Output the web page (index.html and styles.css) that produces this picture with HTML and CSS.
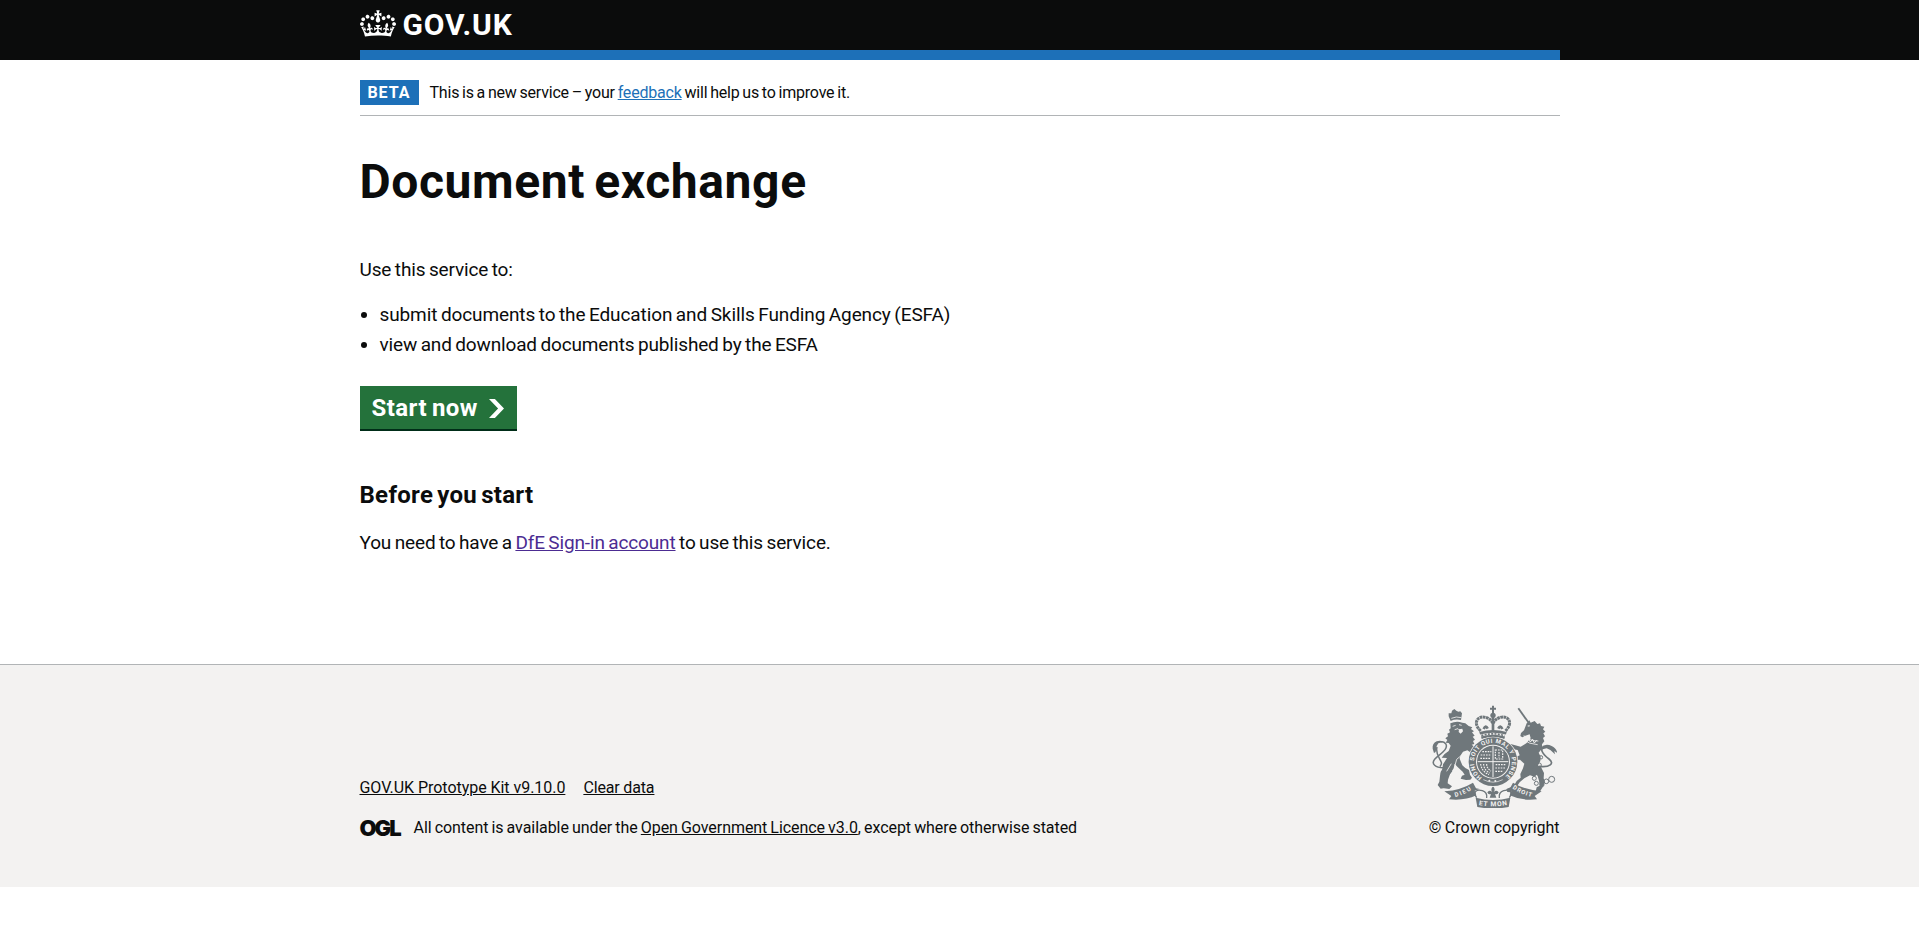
FILE: index.html
```html
<!DOCTYPE html>
<html lang="en">
<head>
<meta charset="utf-8">
<title>Document exchange</title>
<link rel="stylesheet" href="styles.css">
</head>
<body>
<header class="header">
  <div class="container header-inner">
    <a class="logo" href="#">
      <svg class="crown" viewBox="0 0 132 97" fill="currentColor" aria-hidden="true"><path fill-rule="evenodd" d="M25 30.2c3.5 1.5 7.7-.2 9.1-3.7 1.5-3.6-.2-7.8-3.9-9.2-3.6-1.4-7.6.3-9.1 3.9-1.4 3.5.3 7.5 3.9 9zM9 39.5c3.6 1.5 7.8-.2 9.2-3.7 1.5-3.6-.2-7.8-3.9-9.1-3.6-1.5-7.6.2-9.1 3.8-1.4 3.5.3 7.5 3.8 9zM4.4 57.2c3.5 1.5 7.7-.2 9.1-3.8 1.5-3.6-.2-7.7-3.9-9.1-3.5-1.5-7.6.3-9.1 3.8-1.4 3.5.3 7.6 3.9 9.1zm38.3-21.4c3.5 1.5 7.7-.2 9.1-3.8 1.5-3.6-.2-7.7-3.9-9.1-3.6-1.5-7.6.3-9.1 3.8-1.3 3.6.4 7.7 3.9 9.1zm64.4-5.6c-3.6 1.5-7.8-.2-9.1-3.7-1.5-3.6.2-7.8 3.8-9.2 3.6-1.4 7.7.3 9.2 3.9 1.3 3.5-.4 7.5-3.9 9zm15.9 9.3c-3.6 1.5-7.7-.2-9.1-3.7-1.5-3.6.2-7.8 3.7-9.1 3.6-1.5 7.7.2 9.2 3.8 1.5 3.5-.3 7.5-3.8 9zm4.7 17.7c-3.6 1.5-7.8-.2-9.2-3.8-1.5-3.6.2-7.7 3.9-9.1 3.6-1.5 7.7.3 9.2 3.8 1.3 3.5-.4 7.6-3.9 9.1zM89.3 35.8c-3.6 1.5-7.8-.2-9.2-3.8-1.4-3.6.2-7.7 3.9-9.1 3.6-1.5 7.7.3 9.2 3.8 1.4 3.6-.3 7.7-3.9 9.1zM69.7 17.7l8.9 4.7V9.3l-8.9 2.8c-.2-.3-.5-.6-.9-.9L72.4 0H59.6l3.5 11.2c-.3.3-.6.5-.9.9l-8.8-2.8v13.1l8.8-4.7c.3.3.6.7.9.9l-5 15.4v.1c-.2.8-.4 1.6-.4 2.4 0 4.1 3.1 7.5 7 8.1h.2c.3 0 .7.1 1 .1.4 0 .7 0 1-.1h.2c4-.6 7.1-4.1 7.1-8.1 0-.8-.1-1.7-.4-2.4V34l-5.1-15.4c.4-.2.7-.6 1-.9zM66 92.8c16.9 0 32.8 1.1 47.1 3.2 4-16.9 8.9-26.7 14-33.5l-9.6-3.4c1 4.9 1.1 7.2 0 10.2-1.5-1.4-3-4.3-4.2-8.7L108.6 76c2.8-2 5-3.2 7.5-3.3-4.4 9.4-10 11.9-13.6 11.2-4.3-.8-6.3-4.6-5.6-7.9 1-4.7 5.7-5.9 8-.5 4.3-8.7-3-11.4-7.6-8.8 7.1-7.2 7.9-13.5 2.1-21.1-8 6.1-8.1 12.3-4.5 20.8-4.7-5.4-12.1-2.5-9.5 6.2 3.4-5.2 7.9-2 7.2 3.1-.6 4.3-6.4 7.8-13.5 7.2-10.3-.9-10.9-8-11.2-13.8 2.5-.5 7.1 1.8 11 7.3L80.2 60c-4.1 4.4-8 5.3-12.3 5.4 1.4-4.4 8-11.6 8-11.6H55.5s6.4 7.2 7.9 11.6c-4.2-.1-8-1-12.3-5.4l1.4 16.4c3.9-5.5 8.5-7.7 10.9-7.3-.3 5.8-.9 12.8-11.1 13.8-7.2.6-12.9-2.9-13.5-7.2-.7-5 3.8-8.3 7.1-3.1 2.7-8.7-4.6-11.6-9.4-6.2 3.7-8.5 3.6-14.7-4.6-20.8-5.8 7.6-5 13.9 2.2 21.1-4.7-2.6-11.9.1-7.7 8.8 2.3-5.5 7.1-4.2 8.1.5.7 3.3-1.3 7.1-5.7 7.9-3.5.7-9-1.8-13.5-11.2 2.5.1 4.7 1.3 7.5 3.3l-4.7-15.4c-1.2 4.4-2.7 7.2-4.3 8.7-1.1-3-.9-5.3 0-10.2l-9.5 3.4c5 6.9 9.9 16.7 14 33.5 14.8-2.1 30.8-3.2 47.7-3.2z"/></svg>
      <span class="logo-text">GOV.UK</span>
    </a>
  </div>
</header>
<div class="container">
  <div class="phase-banner">
    <strong class="tag"><span>BETA</span></strong>
    <span class="phase-text">This is a new service – your <a class="link" href="#">feedback</a> will help us to improve it.</span>
  </div>
  <main class="main">
    <h1 class="title">Document exchange</h1>
    <p class="body intro">Use this service to:</p>
    <ul class="list">
      <li class="item-submit">submit documents to the Education and Skills Funding Agency (ESFA)</li>
      <li class="item-view">view and download documents published by the ESFA</li>
    </ul>
    <a class="button" href="#"><span>Start now</span>
      <svg class="chevron" viewBox="0 0 33 40" preserveAspectRatio="none" fill="currentColor" aria-hidden="true"><path d="M0 0h13l20 20-20 20H0l20-20z"/></svg>
    </a>
    <h2 class="subtitle">Before you start</h2>
    <p class="body need">You need to have a <a class="link visited" href="#">DfE Sign-in account</a> to use this service.</p>
  </main>
</div>
<footer class="footer">
  <div class="container footer-inner">
    <div class="footer-meta">
      <div class="footer-links"><a class="kit" href="#">GOV.UK Prototype Kit v9.10.0</a><a class="clear" href="#">Clear data</a></div>
      <div class="licence"><span class="ogl">OGL</span><span class="licence-text">All content is available under the <a href="#">Open Government Licence v3.0</a>, except where otherwise stated</span></div>
    </div>
    <div class="copyright">
      <svg class="arms" viewBox="36 27 375 309" aria-hidden="true">
        <defs>
          <path id="garter" d="M186 244A57 57 0 1 1 252 244"/>
          <path id="scroll-left" d="M106 303Q134 296 159 278"/>
          <path id="scroll-mid" d="M176 327Q219 335 262 327"/>
          <path id="scroll-right" d="M277 277Q304 296 336 303"/>
        </defs>
        <!-- royal crown -->
        <g class="line">
          <path d="M219 29v30M210 38h18" stroke-width="6"/>
          <path d="M182 105C156 80 174 58 196 64Q211 67 219 82Q227 67 242 64C264 58 282 80 256 105" stroke-width="9" stroke-dasharray="8 1.5"/>
          <path d="M219 62v42M191 99q6-14 12-1M235 98q6-13 12 1" stroke-width="8"/>
          <path d="M179 112Q219 100 259 112M184 125Q219 115 254 125" stroke-width="8"/>
          <path d="M184 119Q219 108 254 119" stroke-width="5" stroke-dasharray="6 4"/>
        </g>
        <circle class="fill" cx="219" cy="58" r="8"/>
        <!-- lion -->
        <g class="fill">
          <path d="M92 75l-6-14 0-9 8 0 2-8 7-5 6 5 6 3 6-1 5 6-3 20q-17-4-31 3z"/>
          <path d="M91 82q18-8 36-2l9 2 10 8 11 4-4 5 9 7-6 3 8 10-6 3 7 9-6 4 4 9-8 2 13 10 4 14-5 22-8 14-10-3 5-14-3-20-9-6-13 4-8 12-2 9 8 20 9 8 11 6 3 14 6 9-5 6-13 1-16-4 4-9 8-3-6-9-16-15-8-9-3 14-11 18-6 16-1 11 13 9-8 8-16-2-11-8-1-14 4-8 2-22 3-20 12-19-16-1 8-10 13-10 6-16-6-8-9-1 5-8-6-5 8-6-2-8 8-4-3-8 5-4z"/>
          <path d="M72 216q-12 8-12 24l-2 17-5 10 9 11 16-3-5-11 3-14 21-24z"/>
          <path d="M38 158q-2-15 12-22 12-5 19 2l-14 4-5 8-3 18-5 3z"/>
        </g>
        <path class="line" d="M73 215C45 216 33 203 44 190C56 176 88 160 77 143Q71 136 62 138M60 211C76 196 43 184 51 153" stroke-width="4.5"/>
        <path class="knock" d="M94 67q15-7 30-2M98 91l9-3M117 86l8 2M104 101l10-3 5 5M122 180l-12 10-5 18M80 226l14-23" stroke-width="2.5"/>
        <path class="paper" d="M117 100l10-2 2 8-7 7-6-5z"/>
        <!-- unicorn -->
        <path class="line" d="M295 37l30 42" stroke-width="5.5"/>
        <g class="fill">
          <path d="M320 82l8-9 4 7 12-5 8 9 8-2 3 8 10 2-4 8 7 7-6 5 5 9-6 5 4 10-7 9 1 12-11 13 6 12-1 13-7 13 7 12-5 10-12 12-14-4-17 9-14 12-10 15-12 5-5 10-10-1-3-8 9-5 13-4 9-16 12-10-1-11 8-17 4-14-13-12-12 1-14 7-9-3-3-12 7-3 7 7 14-6 9-4-6-16-17-3-5 12-9-1-3-12 13-14 30 8 17-10 13-15-3-12-13 4-9 5-6-4 2-9 9-8z"/>
          <path d="M344 204l19 9 9 18-1 16 4 12-7 15-9 14-12-2 3-12 9-5-2-15-4-14-16-16z"/>
          <path d="M362 155q14-14 33-5 13 5 17 21l-9-6 2 10-14-13-11-5-12 3z"/>
        </g>
        <path class="line" d="M357 211C389 215 405 203 387 189C365 172 359 158 373 153" stroke-width="5"/>
        <path class="knock" d="M311 119q19 16 44 16M308 130q20 15 45 16" stroke-width="2.5"/>
        <path class="knock" d="M316 124l4 9 6-6 5 11 7-8 5 11 7-8" stroke-width="3"/>
        <path class="paper" d="M321 90l8-3-1 5z"/>
        <g class="chain"><circle cx="358" cy="207" r="6"/><circle cx="343" cy="247" r="6"/><circle cx="349" cy="262" r="6"/><circle cx="366" cy="266" r="6"/><circle cx="379" cy="256" r="7"/><circle cx="395" cy="250" r="9"/><circle cx="363" cy="184" r="5"/></g>
        <!-- motto scroll -->
        <g class="fill">
          <path d="M73 286Q124 282 159 260L168 277 179 279 164 284 169 298Q134 315 87 310L94 300z"/>
          <path d="M365 286Q314 282 279 260L270 277 259 279 274 284 269 298Q304 315 351 310L344 300z"/>
          <path d="M167 305Q219 319 271 305L266 333Q219 342 172 333z"/>
        </g>
        <path class="line" d="M170 305C158 289 169 278 187 284Q203 290 200 306M268 305C280 289 269 278 251 284Q235 290 238 306" stroke-width="4"/>
        <path class="fill" d="M219 271q-9 10-2 17-10-8-15 1 2 8 11 5l-4 11h20l-4-11q9 3 11-5-5-9-15-1 7-7-2-17z"/>
        <!-- garter and shield -->
        <circle class="paper" cx="219" cy="197" r="75"/>
        <circle class="fill" cx="219" cy="197" r="73"/>
        <circle class="paper" cx="219" cy="197" r="51"/>
        <circle class="fill" cx="219" cy="197" r="48"/>
        <path class="knock" d="M173 197h92M219 151v92" stroke-width="3"/>
        <path class="knock" d="M187 167h27M182 177h30M181 187h32M226 162h22v27h-22zM237 168v17M182 204c2 15 10 26 25 32M191 204c0 13 8 22 18 27M200 204c0 10 5 16 13 21M227 206h31M226 216h29M226 226h23" stroke-width="3.5" stroke-dasharray="5 3"/>
        <path class="knock" d="M190 251Q219 266 248 251" stroke-width="2"/>
        <circle class="paper" cx="208" cy="254" r="3"/><circle class="paper" cx="226" cy="255" r="3"/>
        <g class="motto"><text><textPath href="#garter" textLength="282">HONI SOIT QUI MAL Y PENSE</textPath></text>
          <text><textPath href="#scroll-left" textLength="53">DIEU</textPath></text>
          <text class="motto-large"><textPath href="#scroll-mid" textLength="86">ET MON</textPath></text>
          <text><textPath href="#scroll-right" textLength="63">DROIT</textPath></text></g>
      </svg>
      <span class="copyright-text">© Crown copyright</span>
    </div>
  </div>
</footer>
</body>
</html>
```
FILE: styles.css
```css
* { box-sizing: border-box; }
body { margin: 0; background: #fff; color: #0b0c0c; font-family: Roboto, "Liberation Sans", sans-serif; font-size: 19px; line-height: 25px; }
h1, h2, p, ul { margin: 0; }
.container { width: 1200px; margin: 0 auto; }
.header { height: 60px; background: #0b0c0c; }
.header-inner { height: 60px; padding-top: 10px; border-bottom: 10px solid #1d70b8; }
.logo { display: flex; gap: 7px; height: 30px; color: #fff; text-decoration: none; }
.crown { width: 36px; height: 27px; }
.logo-text { font-size: 30px; font-weight: 700; line-height: 30px; letter-spacing: .9px; }
.phase-banner { display: flex; align-items: center; height: 56px; padding-top: 10px; border-bottom: 1px solid #b1b4b6; }
.tag { width: 59px; height: 25px; margin-right: 11px; background: #1d70b8; color: #fff; font-size: 16px; line-height: 25px; letter-spacing: 1px; text-align: center; }
.phase-text { padding-top: 1px; font-size: 16px; line-height: 20px; letter-spacing: -.2px; word-spacing: -.95px; }
.link { color: #1d70b8; text-decoration: underline; }
.visited { color: #4c2c92; }
.main { height: 548px; padding-top: 41px; }
.title { margin-bottom: 50px; font-size: 48px; line-height: 50px; letter-spacing: .6px; word-spacing: -3.5px; }
.body { margin-bottom: 20px; }
.intro { letter-spacing: -.15px; word-spacing: -1px; }
.list { margin-bottom: 29px; padding-left: 20px; }
.list li + li { margin-top: 5px; }
.item-submit { letter-spacing: -.11px; word-spacing: -1px; }
.item-view { letter-spacing: -.15px; word-spacing: -1px; }
.need { letter-spacing: -.14px; word-spacing: -1.1px; }
.button { display: flex; align-items: center; gap: 11px; width: 157px; height: 43px; padding-left: 12px; background: #24723b; box-shadow: 0 2px 0 #002d18; color: #fff; font-size: 24px; font-weight: 700; line-height: 24px; letter-spacing: .45px; word-spacing: -1.5px; text-decoration: none; white-space: nowrap; }
.chevron { width: 15px; height: 19px; margin-top: 2px; }
.subtitle { margin: 51px 0 20px; font-size: 24px; line-height: 30px; letter-spacing: .3px; word-spacing: -2.2px; }
.footer { height: 223px; padding-top: 40px; border-top: 1px solid #b1b4b6; background: #f3f2f1; font-size: 16px; line-height: 20px; }
.footer a { color: #0b0c0c; text-decoration: underline; }
.footer-inner { display: flex; justify-content: space-between; align-items: flex-end; height: 133px; }
.footer-links { display: flex; gap: 18px; margin-bottom: 20px; }
.kit { letter-spacing: -.04px; }
.clear { letter-spacing: -.15px; }
.licence { display: flex; align-items: center; }
.licence-text { letter-spacing: -.06px; word-spacing: -.8px; }
.ogl { width: 54px; font-family: Inter, Roboto, sans-serif; font-size: 22px; font-weight: 900; letter-spacing: -2px; }
.copyright { display: flex; flex-direction: column; align-items: flex-end; }
.copyright-text { letter-spacing: -.05px; word-spacing: -.5px; }
.arms { width: 125px; height: 103px; margin: 0 3px 10px 0; }
.fill { fill: #6f777b; }
.paper { fill: #f3f2f1; }
.line { fill: none; stroke: #6f777b; }
.knock { fill: none; stroke: #f3f2f1; }
.chain { fill: none; stroke: #6f777b; stroke-width: 3; }
.motto { fill: #f3f2f1; font-family: Roboto, sans-serif; font-size: 18px; font-weight: 700; }
.motto-large { font-size: 20px; }
```
